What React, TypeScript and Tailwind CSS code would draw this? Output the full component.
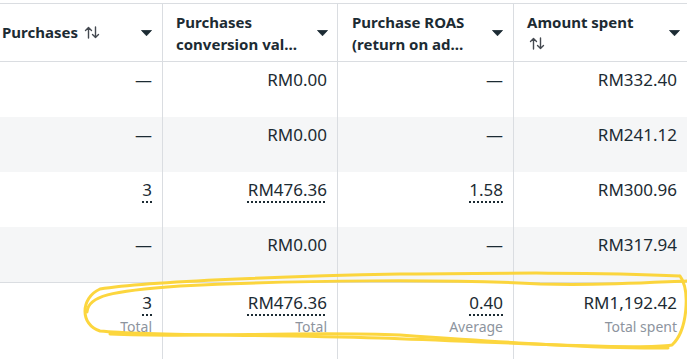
import React from 'react';

const rows = [
  { p: '—', v: 'RM0.00', r: '—', s: 'RM332.40', dotted: false },
  { p: '—', v: 'RM0.00', r: '—', s: 'RM241.12', dotted: false },
  { p: '3', v: 'RM476.36', r: '1.58', s: 'RM300.96', dotted: true },
  { p: '—', v: 'RM0.00', r: '—', s: 'RM317.94', dotted: false },
];

function Caret() {
  return (
    <svg width="11" height="6" viewBox="0 0 11 6" className="shrink-0">
      <path d="M0.5 0.5 L10.5 0.5 L5.5 5.8 Z" fill="#1c2b33" strokeLinejoin="round" stroke="#1c2b33" strokeWidth="0.8" />
    </svg>
  );
}

function SortIcon() {
  return (
    <svg width="16" height="13" viewBox="0 0 16 13" className="shrink-0">
      <g stroke="#444950" strokeWidth="1.4" fill="none" strokeLinecap="round" strokeLinejoin="round">
        <path d="M4.5 12 V1.5 M1.5 4.5 L4.5 1.5 L7.5 4.5" />
        <path d="M11.5 1 V11.5 M8.5 8.5 L11.5 11.5 L14.5 8.5" />
      </g>
    </svg>
  );
}

function Val({ text, dotted }: { text: string; dotted: boolean }) {
  if (dotted && text !== '—') {
    return (
      <span className="underline decoration-dotted decoration-[#1c2b33] decoration-[1.5px] underline-offset-[5px]">{text}</span>
    );
  }
  return <span>{text}</span>;
}

const colW = ['w-[163px]', 'w-[175px]', 'w-[176px]', 'w-[173px]'];

export default function App() {
  return (
    <div className="relative h-[359px] w-[687px] overflow-hidden bg-white pt-[3px] font-['Noto_Sans',sans-serif] text-[#1c2b33]">
      {/* header */}
      <div className="flex h-[59px] border-y border-[#dadde1]">
        <div className={`${colW[0]} flex items-center justify-between border-r border-[#dadde1] pl-[2px] pr-[10px]`}>
          <div className="flex items-center gap-[6px] text-[15px] font-bold">
            Purchases <SortIcon />
          </div>
          <Caret />
        </div>
        <div className={`${colW[1]} flex items-center justify-between border-r border-[#dadde1] pl-[13px] pr-[9px]`}>
          <div className="text-[15px] font-bold leading-[22px]">
            <div>Purchases</div>
            <div>conversion val…</div>
          </div>
          <Caret />
        </div>
        <div className={`${colW[2]} flex items-center justify-between border-r border-[#dadde1] pl-[14px] pr-[10px]`}>
          <div className="text-[15px] font-bold leading-[22px]">
            <div>Purchase ROAS</div>
            <div>(return on ad…</div>
          </div>
          <Caret />
        </div>
        <div className={`${colW[3]} flex items-center justify-between pl-[13px] pr-[7px]`}>
          <div className="text-[15px] font-bold leading-[22px]">
            <div>Amount spent</div>
            <div className="flex h-[22px] items-center pl-[2px]">
              <SortIcon />
            </div>
          </div>
          <Caret />
        </div>
      </div>

      {/* body rows */}
      {rows.map((row, i) => (
        <div key={i} className={`flex h-[55px] text-[17px] leading-[22px] ${i % 2 === 1 ? 'bg-[#f5f6f7]' : 'bg-white'}`}>
          {[row.p, row.v, row.r, row.s].map((cell, j) => (
            <div
              key={j}
              className={`${colW[j]} ${j < 3 ? 'border-r border-[#dadde1]' : ''} pr-[10px] pt-[7px] text-right`}
            >
              <Val text={cell} dotted={row.dotted && j < 3} />
            </div>
          ))}
        </div>
      ))}

      {/* summary */}
      <div className="flex h-[77px] border-t border-[#dadde1]">
        {[
          { v: '3', l: 'Total', d: true },
          { v: 'RM476.36', l: 'Total', d: true },
          { v: '0.40', l: 'Average', d: true },
          { v: 'RM1,192.42', l: 'Total spent', d: false },
        ].map((c, j) => (
          <div
            key={j}
            className={`${colW[j]} ${j < 3 ? 'border-r border-[#dadde1]' : ''} pr-[10px] pt-[9px] text-right`}
          >
            <div className="text-[17px] leading-[22px]">
              <Val text={c.v} dotted={c.d} />
            </div>
            <div className="mt-[4px] text-[14px] leading-[18px] text-[#8d949e]">{c.l}</div>
          </div>
        ))}
      </div>

      {/* hand-drawn highlight */}
      <svg className="pointer-events-none absolute left-0 top-0" width="687" height="359" viewBox="0 0 687 359">
        <g stroke="#fcd434" strokeWidth="3" fill="none" strokeLinecap="round" strokeLinejoin="round" opacity="0.95">
          <path d="M680 276 C690 290 688 330 672 345 C640 350 520 343 380 338 C250 334 150 336 100 331 C80 325 80 298 100 289 C150 281 300 276 400 274 C500 273 600 272 680 276" />
          <path d="M87 312 C88 296 110 291 180 286 C300 280 450 279 540 284 C600 286 660 282 687 281" />
          <path d="M110 334 C200 338 300 331 400 335 C500 342 600 349 668 348" />
        </g>
      </svg>
    </div>
  );
}
